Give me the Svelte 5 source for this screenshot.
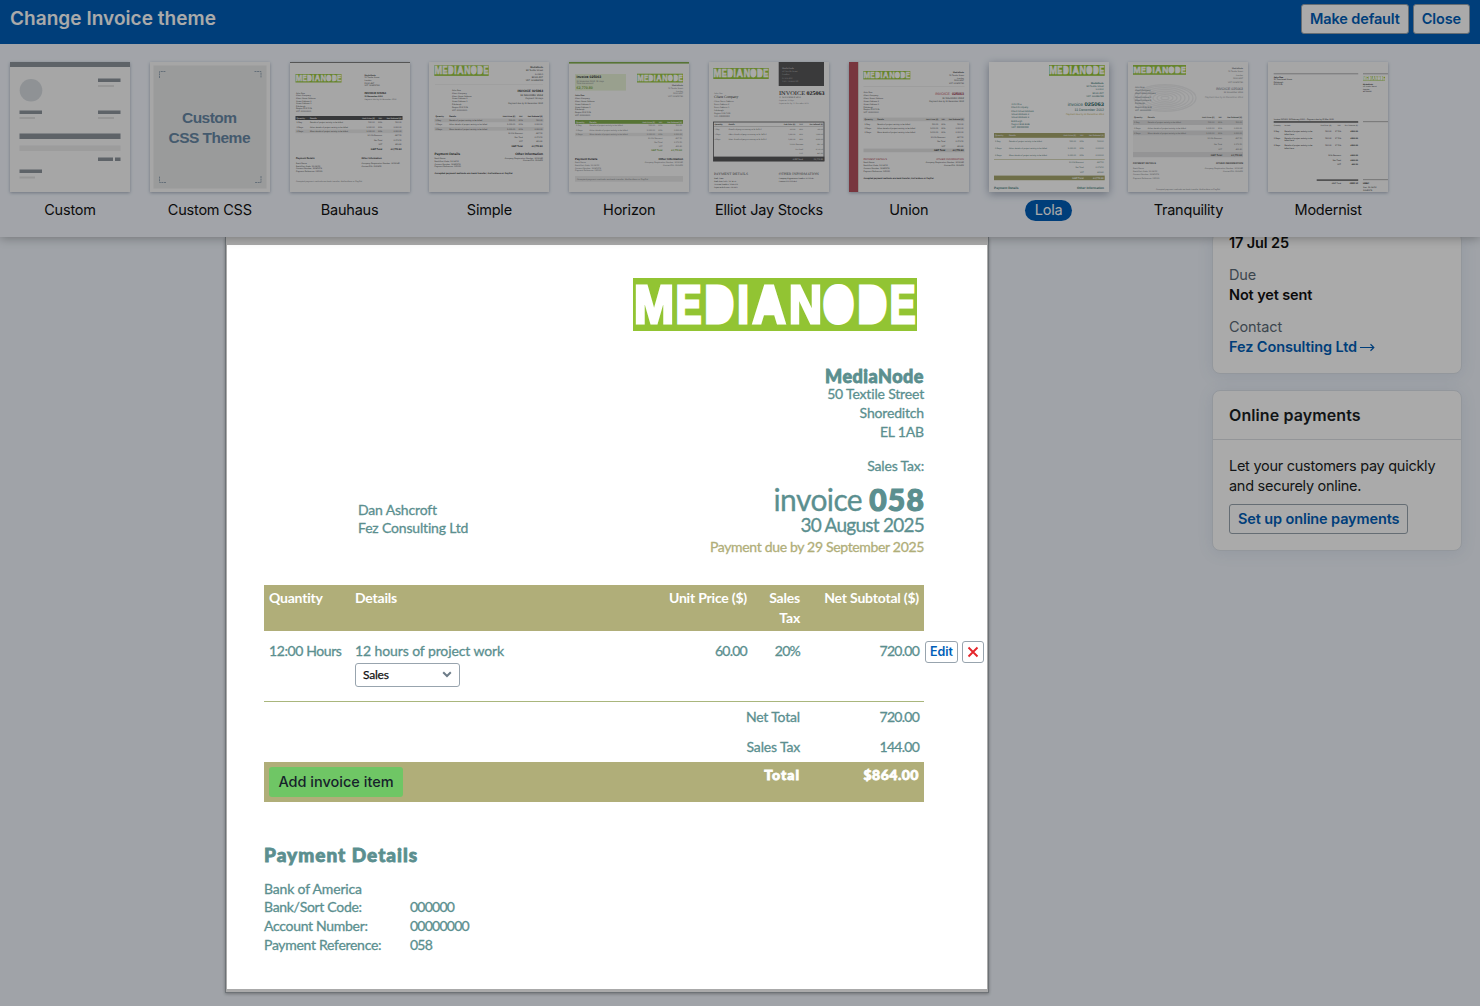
<script lang="ts">
	type Line = {
		x: number;
		y: number;
		t: string;
		s?: number;
		w?: number;
		c?: string;
		a?: 'start' | 'end' | 'middle';
		b?: boolean;
	};
	type Box = { x: number; y: number; w: number; h: number; fill?: string; stroke?: string };
	type Theme = {
		name: string;
		logo?: [number, number, number, number];
		boxes?: Box[];
		lines?: Line[];
		font?: string;
	};

	const DARK = '#101214';
	const MID = '#3c3f42';
	const SOFT = '#707377';

	// Ink extents of each capital (in em), used to fit it to its slot in the logo.
	const logo_letters = [
		{ ch: 'M', x: 3, w: 36, from: 0.073, to: 0.76 },
		{ ch: 'E', x: 44, w: 24, from: 0.073, to: 0.617 },
		{ ch: 'D', x: 73, w: 28, from: 0.071, to: 0.68 },
		{ ch: 'I', x: 105.5, w: 9, from: 0.068, to: 0.21 },
		{ ch: 'A', x: 118, w: 36, from: 0, to: 0.718 },
		{ ch: 'N', x: 158, w: 29, from: 0.074, to: 0.644 },
		{ ch: 'O', x: 190, w: 31, from: 0.044, to: 0.733 },
		{ ch: 'D', x: 226, w: 28, from: 0.071, to: 0.68 },
		{ ch: 'E', x: 258, w: 24, from: 0.073, to: 0.617 }
	].map((l) => {
		const k = (l.w - 3) / ((l.to - l.from) * 53.8);
		return { ch: l.ch, tf: `translate(${l.x + 1.5 - l.from * 53.8 * k} 45) scale(${k} 1)` };
	});

	const company = ['MediaNode', '50 Textile Street', 'London', 'EC2A 4NT', 'VAT: 123456789'];
	const client = [
		'John Doe', 'Client Company', 'Client Street Address', 'Street Address 2',
		'Street Address 3', 'Edinburgh', 'Region EH6 5HB', 'VAT: 000000000'
	];
	const bank = ['Bank Name', 'Bank/Sort Code: 12-34-56', 'Account Number: 12345678', 'Payment Reference: 025063'];

	function block(texts: string[], x: number, y0: number, y1: number, rest: Partial<Line> = {}, first = false): Line[] {
		const step = (y1 - y0) / (texts.length - 1);
		return texts.map((t, i) => ({
			x, y: y0 + i * step, t, s: 2.1, c: MID, ...rest, b: rest.b || (first && i === 0)
		}));
	}

	function table(x0: number, x1: number, head: number, rows: number[], totals: number[], hc = MID, c = MID, tc = DARK): Line[] {
		const p1 = x0 + (x1 - x0) * 0.74;
		const p2 = x0 + (x1 - x0) * 0.81;
		const d = x0 + (x1 - x0) * 0.135;
		const out: Line[] = [
			{ x: x0 + 1, y: head, t: 'Quantity', s: 2.1, c: hc, b: true },
			{ x: d, y: head, t: 'Details', s: 2.1, c: hc, b: true },
			{ x: p1, y: head, t: 'Unit Price (£)', s: 2, c: hc, a: 'end', b: true },
			{ x: p2, y: head, t: 'VAT', s: 2, c: hc, a: 'end', b: true },
			{ x: x1 - 1, y: head, t: 'Net Subtotal (£)', s: 2, c: hc, a: 'end', b: true }
		];
		const names = ['Details of project activity to be billed', 'Other details of project activity to be billed', 'More details of project activity to be billed'];
		rows.forEach((y, i) => {
			out.push(
				{ x: x0 + 1, y, t: ['1 Day', '3 Days', '2 Days'][i], s: 2.1, c },
				{ x: d, y, t: names[i], s: 2.1, w: i ? 38 : 33, c },
				{ x: p1, y, t: i ? '1,000.00' : '500.00', s: 2.1, c, a: 'end' },
				{ x: p2, y, t: '20%', s: 2.1, c, a: 'end' },
				{ x: x1 - 1, y, t: ['500.00', '3,000.00', '2,000.00'][i], s: 2.1, c, a: 'end' }
			);
		});
		const tn = ['10.0% Discount', 'Net Total', 'VAT', 'GBP Total'];
		const tv = ['-897.50', '2,372.50', '461.80', '£2,770.80'];
		totals.forEach((y, i) => {
			const last = i === 3;
			out.push(
				{ x: p2, y, t: tn[i], s: last ? 2.4 : 2.1, c: last ? tc : c, a: 'end', b: last },
				{ x: x1 - 1, y, t: tv[i], s: last ? 2.4 : 2.1, c: last ? tc : c, a: 'end', b: last }
			);
		});
		return out;
	}

	const themes: Theme[] = [
		{
			name: 'Custom',
			boxes: [
				{ x: 0, y: 0, w: 120, h: 5, fill: '#848d95' },
				{ x: 88, y: 16.5, w: 22.5, h: 3.5, fill: '#848d95' },
				{ x: 88, y: 23, w: 16, h: 2, fill: '#dfe0e1' },
				{ x: 9.5, y: 48.5, w: 22.5, h: 3.5, fill: '#848d95' },
				{ x: 9.5, y: 55, w: 15.5, h: 2, fill: '#dfe0e1' },
				{ x: 88, y: 48.5, w: 22.5, h: 3.5, fill: '#848d95' },
				{ x: 88, y: 55, w: 16, h: 2, fill: '#dfe0e1' },
				{ x: 9.5, y: 71.5, w: 101, h: 5.5, fill: '#848d95' },
				{ x: 9.5, y: 83.5, w: 101, h: 5.5, fill: '#e9eaea' },
				{ x: 88, y: 95.5, w: 15, h: 3.5, fill: '#848d95' },
				{ x: 105, y: 95.5, w: 5.5, h: 3.5, fill: '#848d95' },
				{ x: 9.5, y: 107.5, w: 22.5, h: 3.5, fill: '#848d95' },
				{ x: 9.5, y: 114.5, w: 15.5, h: 2, fill: '#dfe0e1' }
			]
		},
		{ name: 'Custom CSS' },
		{
			name: 'Bauhaus',
			logo: [5.5, 12, 46, 8.5],
			boxes: [
				{ x: 0, y: 0, w: 120, h: 0.8, fill: '#555' },
				{ x: 5.5, y: 54, w: 107, h: 4, fill: '#46484a' },
				{ x: 5.5, y: 67.5, w: 107, h: 3.6, fill: '#e8e8e8' }
			],
			lines: [
				...block(company, 74.5, 13.8, 24.4, {}, true),
				...block(client, 6, 31.8, 50),
				{ x: 74.5, y: 32, t: 'INVOICE 025063', s: 2.8, c: DARK, b: true },
				{ x: 74.5, y: 35.4, t: '11 November 2012', s: 2.1, c: DARK, b: true },
				{ x: 74.5, y: 38, t: 'Payment due by 11 December 2012', s: 2, c: SOFT },
				...table(5.5, 112.5, 56.7, [61.2, 65.6, 70], [74.4, 79, 83.2, 88], '#fff'),
				{ x: 6, y: 97, t: 'Payment Details', s: 2.4, c: DARK, b: true },
				...block(bank, 6, 102, 110),
				{ x: 71.5, y: 97, t: 'Other Information', s: 2.4, c: DARK, b: true },
				...block(['Company Registration Number: SA12345', 'Contact/PO: 0123456'], 71.5, 102, 104.8),
				{ x: 6, y: 119.5, t: 'Accepted payment methods are bank transfer, GoCardless or PayPal', s: 2.1, w: 66, c: SOFT }
			]
		},
		{
			name: 'Simple',
			logo: [5.3, 3.3, 54.4, 10.6],
			boxes: [
				{ x: 6, y: 22.3, w: 108, h: 0.5, fill: '#e4e4e4' },
				{ x: 5.5, y: 56.6, w: 109, h: 3.6, fill: '#e6e6e6' },
				{ x: 5.5, y: 65, w: 109, h: 3.6, fill: '#e6e6e6' }
			],
			lines: [
				...block(company, 114, 6, 19.2, { a: 'end', s: 2.4 }, true),
				...block(client, 23, 29, 48.8),
				{ x: 114, y: 29.8, t: 'INVOICE 025063', s: 3.3, c: DARK, a: 'end', b: true },
				{ x: 114, y: 33.8, t: '11 November 2012', s: 2.7, c: DARK, a: 'end' },
				{ x: 114, y: 37.4, t: 'Payment: 30 days', s: 2.2, c: MID, a: 'end' },
				{ x: 114, y: 42, t: 'Payment due by 11 December 2012', s: 2.2, c: MID, a: 'end' },
				...table(5.5, 114.5, 55.2, [59.1, 63.2, 67.5], [71.8, 76, 80.2, 84.6], DARK),
				{ x: 5.5, y: 93, t: 'Payment Details', s: 3.3, c: DARK, b: true },
				...block(bank, 5.5, 96.7, 105.4),
				{ x: 114, y: 93, t: 'Other Information', s: 3.3, c: DARK, a: 'end', b: true },
				...block(['Company Registration Number: SA12345', 'Contact/PO: 0123456'], 114, 96.7, 99.4, { a: 'end' }),
				{ x: 5.5, y: 112, t: 'Accepted payment methods are bank transfer, GoCardless or PayPal', s: 2.2, w: 78, c: DARK, b: true }
			]
		},
		{
			name: 'Horizon',
			logo: [68, 11.7, 46, 8.8],
			boxes: [
				{ x: 0, y: 0, w: 120, h: 1.6, fill: '#7aa842' },
				{ x: 6, y: 12, w: 51, h: 16.6, fill: '#e5f0d4' },
				{ x: 6, y: 58, w: 108, h: 3.8, fill: '#7aa842' },
				{ x: 6, y: 70.8, w: 108, h: 3.4, fill: '#e8e8e8' },
				{ x: 6, y: 114, w: 108, h: 5.7, fill: '#e6e6e6' }
			],
			lines: [
				{ x: 7.5, y: 16.2, t: 'Invoice 025063', s: 3.5, c: DARK, b: true },
				{ x: 7.5, y: 19.6, t: '11 November 2012, 30 days', s: 2.2, c: SOFT },
				{ x: 7.5, y: 22.3, t: 'Total due amount', s: 2.2, c: SOFT },
				{ x: 7.5, y: 26.8, t: '£2,770.80', s: 3.7, c: '#7aa842', b: true },
				...block(company, 114, 24, 35.2, { a: 'end', c: SOFT }, true),
				...block(client, 6, 34.2, 54, {}, true),
				...table(6, 114, 60.7, [64.4, 68.8, 73.2], [77, 80.8, 84.6, 88.8], '#fff', SOFT, '#6d9c36'),
				{ x: 6, y: 98, t: 'Payment Details', s: 2.9, c: DARK, b: true },
				...block(bank, 6, 101.4, 109.4, { c: SOFT }),
				{ x: 114, y: 98, t: 'Other Information', s: 2.9, c: DARK, a: 'end', b: true },
				...block(['Company Registration Number: SA12345', 'Contact/PO: 0123456'], 114, 101.4, 104.2, { a: 'end', c: SOFT }),
				{ x: 8, y: 117.6, t: 'Accepted payment methods are bank transfer, GoCardless or PayPal', s: 2.1, w: 71, c: SOFT }
			]
		},
		{
			name: 'Elliot Jay Stocks',
			font: 'Liberation Serif',
			logo: [4.3, 6, 55.4, 11],
			boxes: [
				{ x: 69.7, y: 0, w: 45.3, h: 24, fill: '#4a4a4c' },
				{ x: 4.6, y: 60, w: 110.4, h: 39, stroke: '#4a4a4c' },
				{ x: 4.3, y: 94.6, w: 111, h: 4.6, fill: '#4a4a4c' },
				{ x: 5, y: 64, w: 110, h: 0.5, fill: '#aaa' }
			],
			lines: [
				...block(company, 73, 6.6, 19.8, { c: '#bbb', s: 2.4 }, true),
				{ x: 70, y: 33.2, t: 'INVOICE', s: 5.6, w: 26, c: DARK },
				{ x: 97.5, y: 33.2, t: '025063', s: 5.6, w: 18, c: DARK, b: true },
				{ x: 70, y: 36, t: '11 NOVEMBER 2012', s: 2.4, c: MID },
				...block(['Payment: 30 days', 'Payment due by 11 December 2012'], 70, 38.8, 41.6, { c: SOFT }),
				{ x: 5, y: 32, t: 'John Doe', s: 2.3, c: SOFT },
				{ x: 5, y: 36.4, t: 'Client Company', s: 3.7, c: DARK },
				...block(client.slice(2), 5, 39.8, 55, { s: 2.3 }),
				...table(4.5, 115, 63, [68, 72.8, 78], [83, 87.6, 92.4], DARK, MID),
				{ x: 94, y: 97.7, t: 'GBP Total', s: 2.3, c: '#ddd', a: 'end', b: true },
				{ x: 114, y: 97.7, t: '£2,770.80', s: 2.3, c: '#ddd', a: 'end', b: true },
				{ x: 5, y: 113.2, t: 'PAYMENT DETAILS', s: 3.4, w: 34, c: MID },
				...block(bank, 5, 116.8, 126, { c: DARK }),
				{ x: 69.7, y: 113.2, t: 'OTHER INFORMATION', s: 3.4, w: 40, c: MID },
				...block(['Company Registration Number: SA12345', 'Contact/PO: 0123456'], 69.7, 116.8, 120, { c: DARK })
			]
		},
		{
			name: 'Union',
			logo: [14.3, 9, 47, 8.4],
			boxes: [
				{ x: 0, y: 0, w: 9, h: 130, fill: '#b04450' },
				{ x: 9, y: 0, w: 1, h: 130, fill: '#dcd6d0' },
				{ x: 14.5, y: 24, w: 101, h: 0.5, fill: '#ddd' },
				{ x: 14.5, y: 55.6, w: 101, h: 3.6, fill: '#e4e4e4' },
				{ x: 14.5, y: 86.6, w: 101, h: 3.6, fill: '#e0e0e0' }
			],
			lines: [
				...block(company, 115, 11, 22.3, { a: 'end' }, true),
				...block(client, 14.5, 31, 51.3),
				{ x: 101, y: 33, t: 'INVOICE', s: 3.6, c: '#b94a55', a: 'end' },
				{ x: 115, y: 33, t: '025063', s: 3.6, c: '#902838', a: 'end', b: true },
				{ x: 115, y: 37, t: '11 November 2012', s: 2.6, a: 'end' },
				{ x: 115, y: 39.8, t: 'Payment due by 11 December 2012', s: 2.2, a: 'end' },
				...table(14.5, 115.5, 58.2, [62.8, 67.1, 71.4], [75.8, 80.4, 84.7, 89.2]),
				{ x: 14.5, y: 97.6, t: 'PAYMENT DETAILS', s: 2.6, c: '#a83040' },
				...block(bank, 14.5, 101, 110),
				{ x: 115, y: 97.6, t: 'OTHER INFORMATION', s: 2.6, c: '#a83040', a: 'end' },
				...block(['Company Registration Number: SA12345', 'Contact/PO: 0123456'], 115, 101, 104, { a: 'end' }),
				{ x: 14.5, y: 117.4, t: 'Accepted payment methods are bank transfer, GoCardless or PayPal', s: 2.2, w: 70, c: DARK, b: true }
			]
		},
		{
			name: 'Lola',
			logo: [60, 3, 55.7, 10.8],
			boxes: [
				{ x: 5, y: 71, w: 110.7, h: 4.8, fill: '#a5a56c' },
				{ x: 5, y: 97.2, w: 110.7, h: 0.5, fill: '#aeae79' },
				{ x: 5, y: 113.6, w: 110.7, h: 4.6, fill: '#a5a56c' }
			],
			lines: [
				...block(company, 114.7, 21.8, 35, { a: 'end', c: '#3f7c7c', s: 2.4 }, true),
				...block(client, 22.3, 43, 66.4, { c: '#3f7c7c', s: 2.4 }),
				{ x: 94, y: 43.8, t: 'invoice', s: 4.9, c: '#3f7c7c', a: 'end' },
				{ x: 115, y: 43.8, t: '025063', s: 5.2, w: 19.5, c: '#2c6464', a: 'end', b: true },
				{ x: 115, y: 49.4, t: '11 December 2012', s: 3.5, c: '#3f7c7c', a: 'end' },
				{ x: 115, y: 53, t: 'Payment due by 11 December 2012', s: 2.4, c: '#c4b060', a: 'end' },
				...table(5, 115.7, 74, [80, 87.2, 94.4], [101, 106.2, 111.4, 116.7], '#eee', '#4c7474', '#fff'),
				{ x: 5, y: 127.4, t: 'Payment Details', s: 3.2, c: '#3f7c7c', b: true },
				{ x: 115, y: 127.4, t: 'Other Information', s: 3.2, c: '#3f7c7c', a: 'end', b: true }
			]
		},
		{
			name: 'Tranquility',
			logo: [5, 3, 53, 9.8],
			boxes: [
				{ x: 5, y: 58, w: 110, h: 5, fill: '#dcddde' },
				{ x: 5, y: 68.5, w: 110, h: 5, fill: '#dcddde' },
				{ x: 5, y: 74, w: 110, h: 16, fill: '#f0f0f0' },
				{ x: 5, y: 90, w: 110, h: 5.2, fill: '#dcddde' }
			],
			lines: [
				...block(company, 115, 7, 20.6, { a: 'end', c: SOFT }, true),
				...block(client, 7, 25.8, 48.8, { c: '#4c5a68', s: 2.2 }),
				{ x: 115, y: 27.8, t: 'INVOICE 025063', s: 3.5, c: '#5c6874', a: 'end' },
				{ x: 115, y: 31, t: '11 November 2012', s: 2.3, c: SOFT, a: 'end' },
				{ x: 115, y: 36.4, t: 'Payment due by 11 December 2012', s: 2.4, c: '#a0a2a4', a: 'end' },
				...table(5, 115, 55.8, [61.2, 66.5, 71.8], [77, 82.6, 87.8, 93.6], MID, '#64676a', MID),
				{ x: 5, y: 101.5, t: 'PAYMENT DETAILS', s: 2.5, c: MID, b: true },
				...block(bank, 5, 106.8, 116.6, { c: SOFT }),
				{ x: 115, y: 101.5, t: 'OTHER INFORMATION', s: 2.5, c: MID, a: 'end', b: true },
				...block(['Company Registration Number: SA12345', 'Contact/PO: 0123456'], 115, 106.8, 110, { a: 'end', c: SOFT }),
				{ x: 60, y: 128.2, t: 'Accepted payment methods are bank transfer, GoCardless or PayPal', s: 2.1, w: 64, c: SOFT, a: 'middle' }
			]
		},
		{
			name: 'Modernist',
			logo: [95, 14, 22, 4.6],
			boxes: [
				{ x: 5.7, y: 11.5, w: 84.5, h: 0.7, fill: '#888' },
				{ x: 95, y: 11.5, w: 25, h: 0.7, fill: '#888' },
				{ x: 5.7, y: 59.2, w: 84.5, h: 1.5, fill: '#505050' },
				{ x: 95, y: 59.4, w: 25, h: 0.7, fill: '#888' },
				{ x: 48.7, y: 117.4, w: 41.5, h: 1.4, fill: '#505050' },
				{ x: 95, y: 117.4, w: 25, h: 0.7, fill: '#888' }
			],
			lines: [
				...block(['John Doe', '50 Townhead Street', 'Edinburgh', 'EH6 5HB'], 5.7, 15.8, 23.4, { c: DARK }, true),
				...block(company.slice(0, 4), 95, 22.8, 30, { c: DARK, s: 1.9 }, true),
				{ x: 5.7, y: 57.8, t: 'Invoice 025063: 11 February 2009 – Payment due by 25 Mar 2009', s: 2.1, w: 60, c: DARK },
				{ x: 5.7, y: 64, t: 'Quantity', s: 1.9, c: MID },
				{ x: 16.5, y: 64, t: 'Details', s: 1.9, c: MID },
				{ x: 63.5, y: 64, t: 'Unit Price (£)', s: 1.9, c: MID, a: 'end' },
				{ x: 73, y: 64, t: 'VAT', s: 1.9, c: MID, a: 'end' },
				{ x: 90, y: 64, t: 'Net Subtotal (£)', s: 1.9, c: MID, a: 'end' },
				...[70.1, 76.9, 84].flatMap((y, i): Line[] => [
					{ x: 5.7, y, t: ['1 Day', '3 Days', '2 Days'][i], s: 2.1, c: DARK },
					{ x: 16.5, y, t: 'Details of project activity to be', s: 2.1, w: 28, c: DARK },
					{ x: 16.5, y: y + 2.5, t: 'billed here', s: 2.1, c: DARK },
					{ x: 63.5, y, t: '500.00', s: 2.1, c: DARK, a: 'end' },
					{ x: 73, y, t: '17.5%', s: 2.1, c: DARK, a: 'end' },
					{ x: 90, y, t: '£500.00', s: 2.1, c: '#000', a: 'end', b: true }
				]),
				...[94, 98.5, 103].flatMap((y, i): Line[] => [
					{ x: 73, y, t: ['10% Discount', 'Net Total', 'VAT'][i], s: 2.1, c: DARK, a: 'end' },
					{ x: 90, y, t: ['£900.00', '£900.00', '£90.10'][i], s: 2.1, c: '#000', a: 'end', b: true }
				]),
				{ x: 73, y: 122, t: 'GBP Total', s: 2.1, c: DARK, a: 'end' },
				{ x: 90, y: 122, t: '£990.10', s: 2.3, c: '#000', a: 'end', b: true },
				{ x: 95, y: 122, t: 'HSBC', s: 2.2, c: '#000', b: true },
				{ x: 95, y: 126.2, t: 'Sort: 12-34-56', s: 2.1, c: DARK },
				{ x: 95, y: 128.8, t: '12345678', s: 2.1, c: DARK }
			]
		}
	];

	let selected = $state('Lola');
	let category = $state('Sales');

	const payment = [
		['Bank/Sort Code:', '000000'],
		['Account Number:', '00000000'],
		['Payment Reference:', '058']
	];
</script>

{#snippet logo(x: number, y: number, w: number, h: number)}
	<svg class="logo" {x} {y} width={w} height={h} viewBox="0 0 284 53" preserveAspectRatio="none">
		<rect width="284" height="53" fill="#92c433" />
		<g font-family="Liberation Sans" font-weight="700" font-size="53.8" fill="#fff" stroke="#fff" stroke-width="3">
			{#each logo_letters as l}
				<text transform={l.tf}>{l.ch}</text>
			{/each}
		</g>
		<!-- solid counters -->
		<g fill="#fff">
			<rect x="76" y="10" width="19" height="33" rx="6" />
			<rect x="229" y="10" width="19" height="33" rx="6" />
			<ellipse cx="205.5" cy="26.5" rx="12.5" ry="18" />
			<rect x="131" y="9" width="10" height="22" />
		</g>
	</svg>
{/snippet}

{#snippet thumb(t: Theme)}
	<svg class="thumb-art" viewBox="0 0 120 130" width="120" height="130">
		{#if t.name === 'Custom'}
			<circle cx="21" cy="28.3" r="11.3" fill="#d5dade" />
		{/if}
		{#if t.name === 'Custom CSS'}
			<rect x="3.5" y="3.5" width="113" height="123" fill="#e7e8e8" />
			<path
				d="M9.5 16V9.5H16M104.5 9.5H111V16M111 114v6.5h-6.5M16 120.5H9.5V114"
				fill="none"
				stroke="#8fa0b0"
				stroke-dasharray="2 .6"
			/>
			<g class="css-label" text-anchor="middle">
				<text x="59.5" y="61" textLength="55">Custom</text>
				<text x="59.5" y="80.5" textLength="82">CSS Theme</text>
			</g>
		{/if}
		{#if t.name === 'Tranquility'}
			{#each [4, 8, 12, 16, 20, 24, 28, 31] as r}
				<ellipse cx="37" cy="36" rx={r} ry={r * 0.43} fill="none" stroke="#e9eaeb" stroke-width="1.2" />
			{/each}
		{/if}
		{#each t.boxes ?? [] as b}
			<rect x={b.x} y={b.y} width={b.w} height={b.h} fill={b.fill ?? 'none'} stroke={b.stroke ?? 'none'} stroke-width="0.8" />
		{/each}
		{#if t.logo}
			{@render logo(t.logo[0], t.logo[1], t.logo[2], t.logo[3])}
		{/if}
		<g font-family={t.font ?? 'Liberation Sans'} text-rendering="geometricPrecision">
			{#each t.lines ?? [] as l}
				<text
					x={l.x}
					y={l.y}
					font-size={l.s}
					fill={l.c ?? MID}
					font-weight={l.b ? 700 : 400}
					text-anchor={l.a ?? 'start'}
					textLength={l.w}
					lengthAdjust="spacingAndGlyphs">{l.t}</text
				>
			{/each}
		</g>
	</svg>
{/snippet}

<div class="app">
	<header class="picker">
		<div class="titlebar">
			<h1>Change Invoice theme</h1>
			<div class="actions">
				<button class="btn">Make default</button>
				<button class="btn">Close</button>
			</div>
		</div>
		<div class="themes">
			{#each themes as t (t.name)}
				<button class="theme" class:active={selected === t.name} onclick={() => (selected = t.name)}>
					<span class="thumb">{@render thumb(t)}</span>
					<span class="label">{t.name}</span>
				</button>
			{/each}
		</div>
	</header>

	<main>
		<article class="sheet">
			<div class="brand">{@render logo(0, 0, 284, 53)}</div>

			<div class="meta">
				<address class="client">
					<div>Dan Ashcroft</div>
					<div>Fez Consulting Ltd</div>
				</address>
				<div class="sender">
					<h2>MediaNode</h2>
					<div>50 Textile Street</div>
					<div>Shoreditch</div>
					<div>EL 1AB</div>
					<div class="taxno">Sales Tax:</div>
					<div class="number">invoice <b>058</b></div>
					<div class="date">30 August 2025</div>
					<div class="due">Payment due by 29 September 2025</div>
				</div>
			</div>

			<div class="items">
				<div class="row head">
					<span>Quantity</span>
					<span>Details</span>
					<span class="right">Unit Price ($)</span>
					<span class="right">Sales Tax</span>
					<span class="right">Net Subtotal ($)</span>
				</div>
				<div class="row item">
					<span class="qty">12:00 Hours</span>
					<span>
						<span class="desc">12 hours of project work</span>
						<button class="select">
							{category}
							<svg width="10" height="7" viewBox="0 0 10 7">
								<path d="M1.2 1.3 5 5l3.8-3.7" fill="none" stroke="#6d7c88" stroke-width="2" />
							</svg>
						</button>
					</span>
					<span class="right num">60.00</span>
					<span class="right num">20%</span>
					<span class="right num">720.00</span>
					<div class="tools">
						<button class="mini edit">Edit</button>
						<button class="mini remove" aria-label="Delete">
							<svg width="12" height="12" viewBox="0 0 12 12">
								<path d="M1.5 1.5l9 9M10.5 1.5l-9 9" stroke="#e5262b" stroke-width="1.9" />
							</svg>
						</button>
					</div>
				</div>
				<div class="sum">
					<span>Net Total</span>
					<span class="num">720.00</span>
				</div>
				<div class="sum">
					<span>Sales Tax</span>
					<span class="num">144.00</span>
				</div>
				<div class="total">
					<button class="add">Add invoice item</button>
					<span class="total-label">Total</span>
					<span class="total-value">$864.00</span>
				</div>
			</div>

			<section class="payment">
				<h3>Payment Details</h3>
				<div class="bank">Bank of America</div>
				{#each payment as [k, v]}
					<div class="pay-row"><span>{k}</span><span class="num">{v}</span></div>
				{/each}
			</section>
		</article>

		<aside>
			<div class="card dates">
				<div class="strong">17 Jul 25</div>
				<div class="muted">Due</div>
				<div class="strong">Not yet sent</div>
				<div class="muted">Contact</div>
				<a href="#contact">Fez Consulting Ltd
					<svg width="15" height="9" viewBox="0 0 15 9">
						<path d="M0 4.5h13.5M10.5 1.3l3.3 3.2-3.3 3.2" fill="none" stroke="#005eb8" stroke-width="1.2" />
					</svg>
				</a>
			</div>
			<div class="card">
				<h4>Online payments</h4>
				<div class="card-body">
					<p>Let your customers pay quickly and securely online.</p>
					<button class="btn">Set up online payments</button>
				</div>
			</div>
		</aside>
	</main>

	<div class="spotlight"></div>
</div>

<style>
	:global(body) { margin: 0; }

	.app {
		position: relative;
		width: 1480px;
		height: 1006px;
		overflow: hidden;
		display: flex;
		flex-direction: column;
		background: #f0f5fc;
		font-family: Inter, 'Liberation Sans', sans-serif;
		font-size: 14.5px;
		color: #1a1e23;
	}
	.app * { box-sizing: border-box; }
	button { font-family: inherit; cursor: pointer; }

	/* dims everything except the invoice itself */
	.spotlight {
		position: absolute;
		left: 227px;
		top: 245px;
		width: 760px;
		height: 744px;
		box-shadow: 0 0 0 2000px rgba(0, 0, 0, 0.333);
		pointer-events: none;
		z-index: 3;
	}

	.picker {
		position: relative;
		z-index: 2;
		height: 237px;
		flex-shrink: 0;
		background: #f3f7fe;
		box-shadow: 0 1px 10px rgba(0, 0, 0, 0.3);
	}
	.titlebar {
		display: flex;
		justify-content: space-between;
		align-items: flex-start;
		height: 44px;
		padding: 4px 10px;
		background: #005eb8;
	}
	h1 {
		margin: 0;
		font-size: 19px;
		line-height: 29px;
		font-weight: 600;
		color: #fff;
		letter-spacing: 0.05px;
	}
	.actions { display: flex; gap: 4px; }
	.btn {
		height: 30px;
		padding: 0 8px 1px;
		border: 1px solid #98a4ae;
		border-radius: 3px;
		background: #fff;
		color: #005eb8;
		font-size: 14.5px;
		font-weight: 600;
		letter-spacing: -0.12px;
		white-space: nowrap;
	}
	.themes {
		display: flex;
		gap: 19.8px;
		padding: 18px 10px 0;
	}
	.theme {
		display: flex;
		flex-direction: column;
		align-items: center;
		width: 120px;
		padding: 0;
		border: none;
		background: none;
		color: #111;
	}
	.thumb {
		width: 120px;
		height: 130px;
		background: #f9f9fa;
		box-shadow: 0 1px 3px rgba(30, 50, 80, 0.35);
	}
	.thumb-art { display: block; opacity: 0.92; }
	.active .thumb { background: #fff; box-shadow: 0 2px 8px rgba(30, 50, 80, 0.4); }
	.active .thumb-art { opacity: 1; }
	.logo { overflow: visible; }
	.css-label { font: 700 15.5px 'Liberation Sans', sans-serif; fill: #5b7f9e; }
	.label {
		margin-top: 8px;
		padding: 0 10px 2px;
		border-radius: 11px;
		font-size: 14.5px;
		line-height: 19px;
		letter-spacing: -0.22px;
		white-space: nowrap;
	}
	.active .label { background: #005eb8; color: #fff; }

	main {
		flex: 1;
		min-height: 0;
		display: flex;
		align-items: flex-start;
		padding-left: 225px;
	}

	.sheet {
		width: 764px;
		height: 756px;
		padding: 41px 64px 0 38px;
		border: 1px solid #a4acb2;
		border-top: none;
		box-shadow: 0 1px 3px rgba(0, 0, 0, 0.3);
		background: #fff;
		color: #5b8f8f;
		font-family: Lato, 'Liberation Sans', sans-serif;
		font-size: 14px;
		line-height: 19px;
		letter-spacing: -0.17px;
		-webkit-text-stroke: 0.3px currentColor;
	}
	.sheet svg, .sheet button { -webkit-text-stroke: 0; letter-spacing: 0; }
	.brand {
		display: flex;
		justify-content: flex-end;
		height: 53px;
		padding-right: 7px;
	}
	.meta {
		display: flex;
		justify-content: space-between;
		margin-top: 36px;
		height: 218px;
	}
	.client {
		margin: 134px 0 0 94px;
		font-style: normal;
		line-height: 18px;
	}
	.sender { text-align: right; }
	h2 {
		margin: 0 0 -1px;
		font-size: 18px;
		line-height: 18px;
		font-weight: 900;
		letter-spacing: 0.5px;
		-webkit-text-stroke: 0.8px currentColor;
	}
	.taxno { margin-top: 15px; }
	.number {
		margin-top: 8px;
		font-size: 30px;
		line-height: 32px;
		letter-spacing: -0.6px;
	}
	.number b {
		font-weight: 900;
		letter-spacing: 1.2px;
		margin-right: -1px;
		-webkit-text-stroke: 1.2px currentColor;
	}
	.date { font-size: 19px; line-height: 20px; letter-spacing: -0.75px; }
	.due { margin-top: 2px; color: #b0ae79; letter-spacing: -0.33px; }

	.row {
		position: relative;
		display: grid;
		grid-template-columns: 86px 1fr 100px 53px 119px;
	}
	.row > span { padding: 0 5px; }
	.right { text-align: right; }
	.num { letter-spacing: -0.75px; }
	.head {
		height: 46px;
		padding-top: 3px;
		line-height: 20px;
		background: #b0ae79;
		color: #fff;
		font-weight: 700;
		letter-spacing: -0.2px;
		-webkit-text-stroke: 0;
	}
	.item {
		height: 71px;
		padding-top: 10px;
		border-bottom: 1px solid #a9b67c;
	}
	.qty { white-space: nowrap; letter-spacing: -0.4px; }
	.desc { display: block; letter-spacing: -0.1px; }
	.select {
		display: flex;
		align-items: center;
		justify-content: space-between;
		width: 105px;
		height: 24px;
		margin-top: 3px;
		padding: 0 7px 1px;
		border: 1px solid #98a4ae;
		border-radius: 3px;
		background: #fff;
		color: #111;
		font-size: 12px;
	}
	.sheet .select { -webkit-text-stroke: 0.25px currentColor; letter-spacing: -0.2px; }
	.tools {
		position: absolute;
		left: 661px;
		top: 10px;
		display: flex;
		gap: 4px;
	}
	.mini {
		display: flex;
		align-items: center;
		justify-content: center;
		height: 22px;
		width: 22px;
		padding: 0;
		border: 1px solid #98a4ae;
		border-radius: 3px;
		background: #fff;
	}
	.edit {
		width: 33px;
		padding-bottom: 1px;
		color: #005eb8;
		font: 600 12.5px Inter, sans-serif;
	}
	.sum {
		display: grid;
		grid-template-columns: 536px 1fr;
		height: 30px;
		padding: 5px 5px 0 0;
		text-align: right;
	}
	.total {
		display: flex;
		align-items: flex-start;
		height: 40px;
		padding: 5px;
		background: #b0ae79;
		color: #fff;
		font-weight: 900;
		line-height: 15px;
		letter-spacing: 0.5px;
		-webkit-text-stroke: 0.8px currentColor;
	}
	.add {
		width: 134px;
		height: 30px;
		padding: 0 0 2px;
		border: none;
		border-radius: 3px;
		background: #6fc665;
		color: #16222b;
		font: 500 14.5px Inter, sans-serif;
	}
	.total-label { width: 397px; text-align: right; letter-spacing: 1px; }
	.total-value { flex: 1; text-align: right; }

	.payment { margin-top: 43px; }
	h3 {
		margin: 0 0 15px;
		font-size: 19px;
		line-height: 20px;
		font-weight: 900;
		letter-spacing: 1px;
		-webkit-text-stroke: 0.8px currentColor;
	}
	.bank { margin-bottom: -1px; }
	.bank { line-height: 18px; }
	.pay-row { display: grid; grid-template-columns: 146px 1fr; }
	.pay-row span:first-child { letter-spacing: -0.3px; }

	aside { margin-left: 223px; width: 250px; }
	.card {
		margin-bottom: 16px;
		border: 1px solid #dde3ea;
		border-radius: 8px;
		background: #fff;
		box-shadow: 0 2px 16px rgba(60, 90, 150, 0.1);
		line-height: 20px;
	}
	.dates {
		height: 142px;
		margin-top: -5px;
		padding: 0 16px;
	}
	.strong { font-weight: 600; color: #111; letter-spacing: -0.12px; }
	.muted { margin-top: 12px; color: #5b6a76; letter-spacing: -0.1px; }
	.card a {
		display: block;
		font-weight: 600;
		color: #005eb8;
		text-decoration: none;
		letter-spacing: -0.1px;
	}
	.card a svg { margin-left: -1px; }
	.card h4 {
		margin: 0;
		height: 49px;
		padding: 0 16px;
		border-bottom: 1px solid #dde0e4;
		font-size: 16px;
		line-height: 48px;
		font-weight: 600;
		letter-spacing: 0.1px;
	}
	.card-body { padding: 16px; }
	.card p { margin: 0 0 8px; letter-spacing: -0.27px; }
</style>
